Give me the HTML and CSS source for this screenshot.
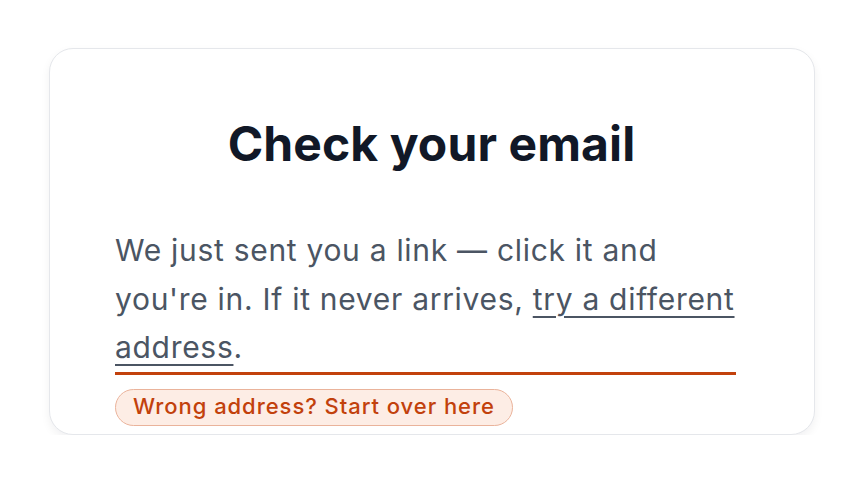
FILE: index.html
```html
<!DOCTYPE html>
<html>
<head>
<meta charset="utf-8">
<link rel="stylesheet" href="styles.css">
</head>
<body>
<div class="card">
  <h1 class="title">Check your email</h1>
  <p class="message">We just sent you a link — click it and you're in. If it never arrives, <a class="link" href="#">try a different address</a>.</p>
  <span class="badge">Wrong address? Start over here</span>
</div>
</body>
</html>
```
FILE: styles.css
```css
html, body {
  margin: 0;
  padding: 0;
  background: #ffffff;
}
body {
  font-family: Inter, "Noto Sans", sans-serif;
  padding: 48px 0 0 49px;
}
.card {
  box-sizing: border-box;
  width: 766px;
  height: 387px;
  border: 1px solid #e5e7eb;
  border-radius: 24px;
  box-shadow: 0 4px 10px rgba(17, 24, 39, 0.06);
  padding: 66px 66px 0 65px;
  overflow: hidden;
  background: #fff;
}
.title {
  margin: 0;
  font-size: 48px;
  line-height: 58px;
  font-weight: 700;
  color: #111827;
  text-align: center;
  letter-spacing: 0.1px;
}
.message {
  margin: 53px 0 0;
  width: 621px;
  font-size: 30px;
  line-height: 48.5px;
  letter-spacing: 0.7px;
  color: #4b5563;
  padding-bottom: 0;
  border-bottom: 3px solid #c2410c;
}
.link {
  color: #4b5563;
  text-decoration: underline;
  text-decoration-thickness: 2px;
  text-underline-offset: 6px;
}
.badge {
  display: inline-block;
  margin-top: 14px;
  padding: 4px 17px 6px;
  font-size: 22px;
  line-height: 25px;
  font-weight: 500;
  letter-spacing: 0.95px;
  color: #c2410c;
  background: #fdede5;
  border: 1px solid #eab39b;
  border-radius: 999px;
}
```
